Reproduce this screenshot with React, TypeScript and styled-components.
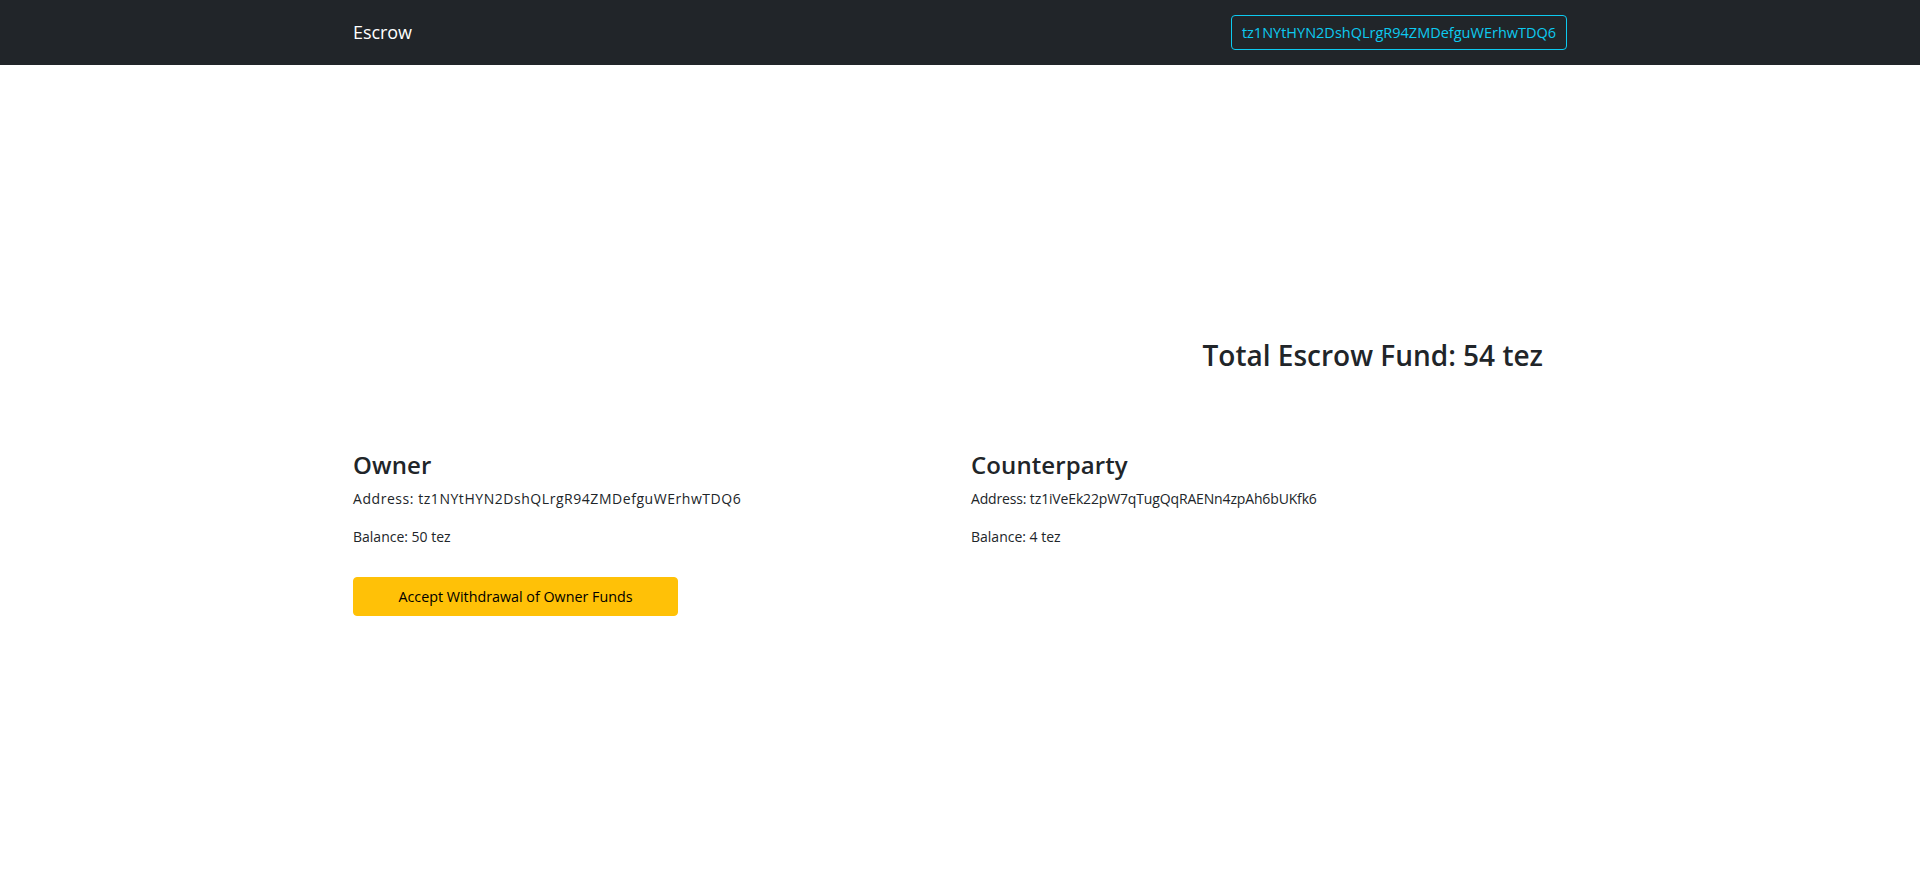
import React from "react";
import styled, { createGlobalStyle } from "styled-components";

const GlobalStyle = createGlobalStyle`
  html, body {
    margin: 0;
    padding: 0;
    background: #ffffff;
    font-family: "Open Sans", "Noto Sans", sans-serif;
    color: #212529;
  }
  * { box-sizing: border-box; }
`;

const NavBar = styled.nav`
  background: #212529;
  height: 65px;
  display: flex;
  align-items: center;
`;

const Container = styled.div`
  width: 1214px;
  margin: 0 auto;
  display: flex;
  flex-direction: column;
`;

const NavInner = styled(Container)`
  flex-direction: row;
  align-items: center;
  justify-content: space-between;
`;

const Brand = styled.a`
  color: #ffffff;
  font-size: 18px;
  line-height: 1.2;
  letter-spacing: -0.1px;
  text-decoration: none;
`;

const WalletButton = styled.button`
  background: transparent;
  border: 1px solid #0dcaf0;
  border-radius: 4px;
  color: #0dcaf0;
  font-family: inherit;
  font-size: 14.5px;
  height: 35px;
  width: 336px;
  padding: 0 8px;
  white-space: nowrap;
`;

const Main = styled(Container)`
  padding-top: 274px;
`;

const TotalHeading = styled.h2`
  margin: 0;
  padding-right: 24px;
  text-align: right;
  font-size: 28px;
  font-weight: 600;
  line-height: 1.2;
`;

const Columns = styled.div`
  display: grid;
  grid-template-columns: 1fr 1fr;
  column-gap: 22px;
  margin-top: 77px;
`;

const Party = styled.section`
  display: flex;
  flex-direction: column;
  align-items: flex-start;
`;

const PartyTitle = styled.h4`
  margin: 0 0 9px;
  font-size: 24px;
  font-weight: 600;
  line-height: 29px;
  letter-spacing: 0.1px;
`;

const Info = styled.p<{ $gap?: number; $tracking?: number }>`
  margin: 0 0 ${(p) => p.$gap ?? 0}px;
  font-size: 14px;
  line-height: 21px;
  letter-spacing: ${(p) => p.$tracking ?? 0}px;
`;

const ActionButton = styled.button`
  margin-top: 30px;
  width: 325px;
  height: 39px;
  border: 1px solid #ffc107;
  border-radius: 4px;
  background: #ffc107;
  color: #000000;
  font-family: inherit;
  font-size: 14.3px;
`;

export default function App() {
  return (
    <>
      <GlobalStyle />
      <NavBar>
        <NavInner>
          <Brand href="#">Escrow</Brand>
          <WalletButton>tz1NYtHYN2DshQLrgR94ZMDefguWErhwTDQ6</WalletButton>
        </NavInner>
      </NavBar>
      <Main>
        <TotalHeading>Total Escrow Fund: 54 tez</TotalHeading>
        <Columns>
          <Party>
            <PartyTitle>Owner</PartyTitle>
            <Info $gap={17} $tracking={0.55}>
              Address: tz1NYtHYN2DshQLrgR94ZMDefguWErhwTDQ6
            </Info>
            <Info>Balance: 50 tez</Info>
            <ActionButton>Accept Withdrawal of Owner Funds</ActionButton>
          </Party>
          <Party>
            <PartyTitle>Counterparty</PartyTitle>
            <Info $gap={17} $tracking={-0.15}>
              Address: tz1iVeEk22pW7qTugQqRAENn4zpAh6bUKfk6
            </Info>
            <Info>Balance: 4 tez</Info>
          </Party>
        </Columns>
      </Main>
    </>
  );
}
